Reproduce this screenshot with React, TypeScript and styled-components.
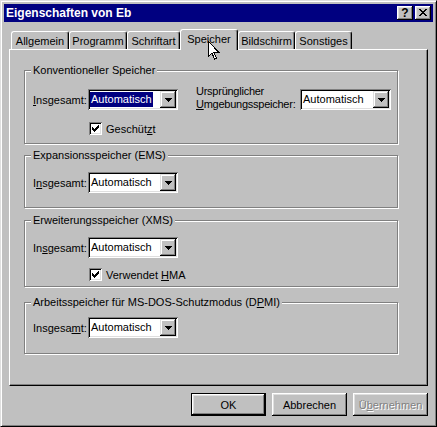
import React from "react";
import styled, { createGlobalStyle } from "styled-components";

const GlobalStyle = createGlobalStyle`
  html, body {
    margin: 0;
    padding: 0;
    background: #c0c0c0;
  }
  body {
    font-family: "Liberation Sans", Arial, sans-serif;
    font-size: 11px;
    color: #000;
  }
`;

const tabs = [
  { label: "Allgemein", width: 58 },
  { label: "Programm", width: 58 },
  { label: "Schriftart", width: 53 },
  { label: "Speicher", width: 58, active: true },
  { label: "Bildschirm", width: 57 },
  { label: "Sonstiges", width: 57 },
];

export default function App() {
  return (
    <>
      <GlobalStyle />
      <Window>
        <TitleBar>
          <Title>Eigenschaften von Eb</Title>
          <TitleButtons>
            <TitleButton>
              <HelpGlyph>?</HelpGlyph>
            </TitleButton>
            <TitleButton>
              <svg width="8" height="7" viewBox="0 0 8 7" shapeRendering="crispEdges">
                <path
                  d="M0 0h2v1h1v1h2V1h1V0h2v1H7v1H6v1H5v1h1v1h1v1h1v1H6V6H5V5H3v1H2v1H0V6h1V5h1V4h1V3H2V2H1V1H0z"
                  fill="#000"
                />
              </svg>
            </TitleButton>
          </TitleButtons>
        </TitleBar>

        <TabStrip>
          {tabs.map((t) => (
            <Tab key={t.label} $width={t.width} $active={!!t.active}>
              {t.label}
            </Tab>
          ))}
        </TabStrip>

        <Panel>
          <Group $mt={0} $pb={8}>
            <Legend>Konventioneller Speicher</Legend>
            <FieldRow $mt={8}>
              <Label>
                <U>I</U>nsgesamt:
              </Label>
              <Combo value="Automatisch" selected width={90} />
              <TwoLineLabel>
                Ursprünglicher
                <br />
                <U>U</U>mgebungsspeicher:
              </TwoLineLabel>
              <Combo value="Automatisch" width={91} />
            </FieldRow>
            <Check $mt={8}>
              Geschüt<U>z</U>t
            </Check>
          </Group>

          <Group $mt={11} $pb={14}>
            <Legend>Expansionsspeicher (EMS)</Legend>
            <FieldRow $mt={10}>
              <Label>
                I<U>n</U>sgesamt:
              </Label>
              <Combo value="Automatisch" width={90} />
            </FieldRow>
          </Group>

          <Group $mt={12} $pb={5}>
            <Legend>Erweiterungsspeicher (XMS)</Legend>
            <FieldRow $mt={10}>
              <Label>
                In<U>s</U>gesamt:
              </Label>
              <Combo value="Automatisch" width={90} />
            </FieldRow>
            <Check $mt={10}>
              Verwendet <U>H</U>MA
            </Check>
          </Group>

          <Group $mt={15} $pb={15}>
            <Legend>
              Arbeitsspeicher für MS-DOS-Schutzmodus (D<U>P</U>MI)
            </Legend>
            <FieldRow $mt={8}>
              <Label>
                Insgesa<U>m</U>t:
              </Label>
              <Combo value="Automatisch" width={90} />
            </FieldRow>
          </Group>
        </Panel>

        <ButtonRow>
          <Button $default>OK</Button>
          <Button>Abbrechen</Button>
          <Button disabled>
            Ü<U>b</U>ernehmen
          </Button>
        </ButtonRow>

        <Cursor width="12" height="19" viewBox="0 0 12 19" shapeRendering="crispEdges">
          <path
            d="M0.5 0.5v15l3.5-3.5 2.5 6 2-1-2.5-5.5h5z"
            fill="#fff"
            stroke="#000"
            strokeWidth="1"
          />
        </Cursor>
      </Window>
    </>
  );
}

function Combo({ value, selected, width }: { value: string; selected?: boolean; width: number }) {
  return (
    <ComboField $w={width}>
      <ComboValue>
        <ComboText $selected={!!selected}>{value}</ComboText>
      </ComboValue>
      <ComboButton>
        <svg width="7" height="4" viewBox="0 0 7 4" shapeRendering="crispEdges">
          <path d="M0 0h7v1H6v1H5v1H4v1H3V3H2V2H1V1H0z" fill="#000" />
        </svg>
      </ComboButton>
    </ComboField>
  );
}

function Check({ children, $mt }: { children: React.ReactNode; $mt: number }) {
  return (
    <CheckRow $mt={$mt}>
      <CheckBox>
        <svg width="7" height="7" viewBox="0 0 7 7" shapeRendering="crispEdges">
          <path d="M6 0h1v3H6v1H5v1H4v1H3v1H2V6H1V5H0V2h1v1h1v1h1V3h1V2h1V1h1z" fill="#000" />
        </svg>
      </CheckBox>
      <span>{children}</span>
    </CheckRow>
  );
}

const Window = styled.div`
  position: relative;
  box-sizing: border-box;
  width: 437px;
  height: 427px;
  background: #c0c0c0;
  border: 1px solid;
  border-color: #dfdfdf #000 #000 #dfdfdf;
  box-shadow: inset 1px 1px #fff, inset -1px -1px #808080;
  padding: 3px;
  display: flex;
  flex-direction: column;
`;

const TitleBar = styled.div`
  height: 18px;
  background: #000080;
  display: flex;
  align-items: center;
  padding: 0 2px;
`;

const Title = styled.div`
  flex: 1;
  color: #fff;
  font-weight: bold;
  font-size: 12px;
`;

const TitleButtons = styled.div`
  display: flex;
  gap: 2px;
`;

const TitleButton = styled.div`
  box-sizing: border-box;
  width: 16px;
  height: 14px;
  background: #c0c0c0;
  box-shadow: inset -1px -1px #000, inset 1px 1px #fff, inset -2px -2px #808080,
    inset 2px 2px #dfdfdf;
  display: flex;
  align-items: center;
  justify-content: center;
  padding-bottom: 1px;
`;

const HelpGlyph = styled.span`
  font-weight: bold;
  font-size: 12px;
  line-height: 12px;
`;

const TabStrip = styled.div`
  position: relative;
  z-index: 1;
  display: flex;
  align-items: flex-end;
  height: 20px;
  margin: 7px 5px 0;
  padding-left: 2px;
`;

const Tab = styled.div<{ $width: number; $active: boolean }>`
  box-sizing: border-box;
  width: ${(p) => p.$width}px;
  height: ${(p) => (p.$active ? 21 : 18)}px;
  margin-bottom: ${(p) => (p.$active ? -1 : 0)}px;
  background: #c0c0c0;
  border-top: 1px solid #fff;
  border-left: 1px solid #fff;
  border-right: 1px solid #000;
  border-radius: 3px 3px 0 0;
  box-shadow: inset -1px 0 #808080;
  display: flex;
  align-items: ${(p) => (p.$active ? "flex-start" : "center")};
  padding-top: ${(p) => (p.$active ? 3 : 0)}px;
  justify-content: center;
  white-space: nowrap;
`;

const Panel = styled.div`
  box-sizing: border-box;
  height: 337px;
  margin: 0 5px;
  border: 1px solid;
  border-color: #fff #000 #000 #fff;
  box-shadow: inset -1px -1px #808080;
  padding: 20px 0 0 14px;
  display: flex;
  flex-direction: column;
`;

const Group = styled.div<{ $mt: number; $pb: number }>`
  box-sizing: border-box;
  width: 374px;
  margin-top: ${(p) => p.$mt}px;
  border: 1px solid #808080;
  box-shadow: inset 1px 1px #fff, 1px 1px #fff;
  padding: 0 0 ${(p) => p.$pb}px 8px;
`;

const Legend = styled.div`
  width: fit-content;
  margin: -7px 0 0 -2px;
  padding: 0 2px;
  line-height: 13px;
  background: #c0c0c0;
  white-space: nowrap;
`;

const FieldRow = styled.div<{ $mt: number }>`
  display: flex;
  align-items: center;
  margin-top: ${(p) => p.$mt}px;
`;

const Label = styled.div`
  width: 55px;
  white-space: nowrap;
`;

const TwoLineLabel = styled.div`
  align-self: flex-end;
  width: 100px;
  margin: 0 4px 3px 18px;
  line-height: 13px;
  letter-spacing: -0.25px;
  white-space: nowrap;
`;

const U = styled.span`
  text-decoration: underline;
  text-underline-offset: 1px;
`;

const ComboField = styled.div<{ $w: number }>`
  box-sizing: border-box;
  width: ${(p) => p.$w}px;
  height: 21px;
  background: #fff;
  box-shadow: inset 1px 1px #808080, inset -1px -1px #fff, inset 2px 2px #000,
    inset -2px -2px #dfdfdf;
  padding: 2px;
  display: flex;
  align-items: center;
`;

const ComboValue = styled.div`
  flex: 1;
`;

const ComboText = styled.span<{ $selected: boolean }>`
  display: inline-block;
  padding: 1px 1px;
  line-height: 13px;
  background: ${(p) => (p.$selected ? "#000080" : "transparent")};
  color: ${(p) => (p.$selected ? "#fff" : "#000")};
`;

const ComboButton = styled.div`
  box-sizing: border-box;
  width: 16px;
  height: 17px;
  background: #c0c0c0;
  box-shadow: inset -1px -1px #000, inset 1px 1px #dfdfdf, inset -2px -2px #808080,
    inset 2px 2px #fff;
  display: flex;
  align-items: center;
  justify-content: center;
`;

const CheckRow = styled.div<{ $mt: number }>`
  display: flex;
  align-items: center;
  gap: 4px;
  margin: ${(p) => p.$mt}px 0 0 56px;
  white-space: nowrap;
`;

const CheckBox = styled.div`
  box-sizing: border-box;
  width: 13px;
  height: 13px;
  background: #fff;
  box-shadow: inset 1px 1px #808080, inset -1px -1px #fff, inset 2px 2px #000,
    inset -2px -2px #dfdfdf;
  display: flex;
  align-items: center;
  justify-content: center;
`;

const ButtonRow = styled.div`
  display: flex;
  justify-content: flex-end;
  gap: 6px;
  margin: 7px 5px 0 0;
`;

const Button = styled.button<{ $default?: boolean }>`
  box-sizing: border-box;
  width: 75px;
  height: 23px;
  padding: 0;
  font-family: "Liberation Sans", Arial, sans-serif;
  font-size: 11px;
  color: #000;
  background: #c0c0c0;
  border: ${(p) => (p.$default ? "1px solid #000" : "none")};
  box-shadow: inset -1px -1px #000, inset 1px 1px #fff, inset -2px -2px #808080,
    inset 2px 2px #dfdfdf;

  &:disabled {
    color: #808080;
    text-shadow: 1px 1px #fff;
  }
`;

const Cursor = styled.svg`
  position: absolute;
  left: 207px;
  top: 40px;
  z-index: 5;
`;
